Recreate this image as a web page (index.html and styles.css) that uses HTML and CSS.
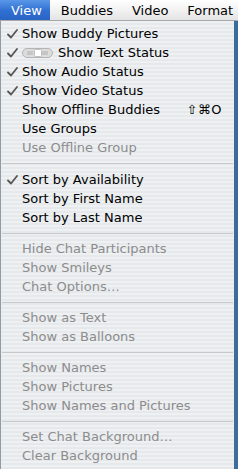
FILE: index.html
```html
<!DOCTYPE html>
<html>
<head>
<meta charset="utf-8">
<link rel="stylesheet" href="styles.css">
</head>
<body>
<div class="screen">
  <div class="menubar">
    <span class="title active">View</span>
    <span class="title">Buddies</span>
    <span class="title">Video</span>
    <span class="title">Format</span>
  </div>
  <div class="below">
    <div class="menu">
      <div class="item"><span class="check"><svg width="11" height="10" viewBox="0 0 11 10"><path d="M1 5.5 L4 8.5 L10 1" fill="none" stroke="#555" stroke-width="1.8" stroke-linecap="round" stroke-linejoin="round"/></svg></span><span class="label">Show Buddy Pictures</span></div>
      <div class="item"><span class="check"><svg width="11" height="10" viewBox="0 0 11 10"><path d="M1 5.5 L4 8.5 L10 1" fill="none" stroke="#555" stroke-width="1.8" stroke-linecap="round" stroke-linejoin="round"/></svg></span><span class="toggle"><svg width="31" height="10" viewBox="0 0 31 10"><rect x="0.5" y="0.5" width="30" height="9" rx="4.5" fill="#dcdcdc" stroke="#b4b4b4"/><path d="M6 3v4M8 3v4M10 3v4M21 3v4M23 3v4M25 3v4" stroke="#b0b0b0" stroke-width="1"/><rect x="12.5" y="1.5" width="7" height="7" rx="1" fill="#ffffff" stroke="#c0c0c0"/></svg></span><span class="label">Show Text Status</span></div>
      <div class="item"><span class="check"><svg width="11" height="10" viewBox="0 0 11 10"><path d="M1 5.5 L4 8.5 L10 1" fill="none" stroke="#555" stroke-width="1.8" stroke-linecap="round" stroke-linejoin="round"/></svg></span><span class="label">Show Audio Status</span></div>
      <div class="item"><span class="check"><svg width="11" height="10" viewBox="0 0 11 10"><path d="M1 5.5 L4 8.5 L10 1" fill="none" stroke="#555" stroke-width="1.8" stroke-linecap="round" stroke-linejoin="round"/></svg></span><span class="label">Show Video Status</span></div>
      <div class="item"><span class="check"></span><span class="label">Show Offline Buddies</span><span class="shortcut">⇧⌘O</span></div>
      <div class="item"><span class="check"></span><span class="label">Use Groups</span></div>
      <div class="item disabled"><span class="check"></span><span class="label">Use Offline Group</span></div>
      <div class="sep first"></div>
      <div class="item"><span class="check"><svg width="11" height="10" viewBox="0 0 11 10"><path d="M1 5.5 L4 8.5 L10 1" fill="none" stroke="#555" stroke-width="1.8" stroke-linecap="round" stroke-linejoin="round"/></svg></span><span class="label">Sort by Availability</span></div>
      <div class="item"><span class="check"></span><span class="label">Sort by First Name</span></div>
      <div class="item"><span class="check"></span><span class="label">Sort by Last Name</span></div>
      <div class="sep"></div>
      <div class="item disabled"><span class="check"></span><span class="label">Hide Chat Participants</span></div>
      <div class="item disabled"><span class="check"></span><span class="label">Show Smileys</span></div>
      <div class="item disabled"><span class="check"></span><span class="label">Chat Options…</span></div>
      <div class="sep"></div>
      <div class="item disabled"><span class="check"></span><span class="label">Show as Text</span></div>
      <div class="item disabled"><span class="check"></span><span class="label">Show as Balloons</span></div>
      <div class="sep"></div>
      <div class="item disabled"><span class="check"></span><span class="label">Show Names</span></div>
      <div class="item disabled"><span class="check"></span><span class="label">Show Pictures</span></div>
      <div class="item disabled"><span class="check"></span><span class="label">Show Names and Pictures</span></div>
      <div class="sep"></div>
      <div class="item disabled"><span class="check"></span><span class="label">Set Chat Background…</span></div>
      <div class="item disabled"><span class="check"></span><span class="label">Clear Background</span></div>
    </div>
    <div class="desktop"></div>
  </div>
</div>
</body>
</html>
```
FILE: styles.css
```css
html, body {
  margin: 0;
  padding: 0;
}
body {
  width: 238px;
  height: 469px;
  overflow: hidden;
  font-family: "DejaVu Sans", "Liberation Sans", sans-serif;
  font-size: 13px;
  color: #000;
}
.screen {
  display: flex;
  flex-direction: column;
  width: 238px;
  height: 469px;
}
.menubar {
  height: 21px;
  flex: none;
  display: flex;
  align-items: stretch;
  background: linear-gradient(#ffffff, #f2f2f2 50%, #e4e4e4);
  border-bottom: 1px solid #a8a8a8;
  box-sizing: border-box;
  white-space: nowrap;
  overflow: hidden;
}
.title {
  display: flex;
  align-items: center;
  padding: 0 8px 0 11px;
  font-size: 13px;
  color: #000;
  flex: none;
}
.title.active {
  background: linear-gradient(#5a97e8, #2f6fd2 55%, #2a64c4);
  color: #fff;
}
.below {
  flex: 1;
  display: flex;
}
.menu {
  width: 234px;
  box-sizing: border-box;
  border-left: 1px solid #8e9aa6;
  padding: 3px 0 4px 0;
  background: repeating-linear-gradient(#eef0f2 0px, #eef0f2 2px, #e6e9ec 2px, #e6e9ec 4px);
  display: flex;
  flex-direction: column;
}
.desktop {
  width: 4px;
  background: linear-gradient(#3b6a9c, #3f6d99);
}
.item {
  height: 19px;
  display: flex;
  align-items: center;
  white-space: nowrap;
}
.check {
  width: 21px;
  padding-left: 6px;
  box-sizing: border-box;
  display: flex;
  align-items: center;
  flex: none;
}
.toggle {
  display: flex;
  align-items: center;
  margin-right: 5px;
}
.label {
  flex: 1;
}
.shortcut {
  padding-right: 12px;
  letter-spacing: 0.5px;
}
.disabled {
  color: #8c8c8c;
}
.sep {
  height: 12px;
  display: flex;
  align-items: center;
  padding: 0 1px;
}
.sep::before {
  content: "";
  flex: 1;
  height: 1px;
  background: #c6c8ca;
}
.sep.first {
  height: 13px;
}
```
